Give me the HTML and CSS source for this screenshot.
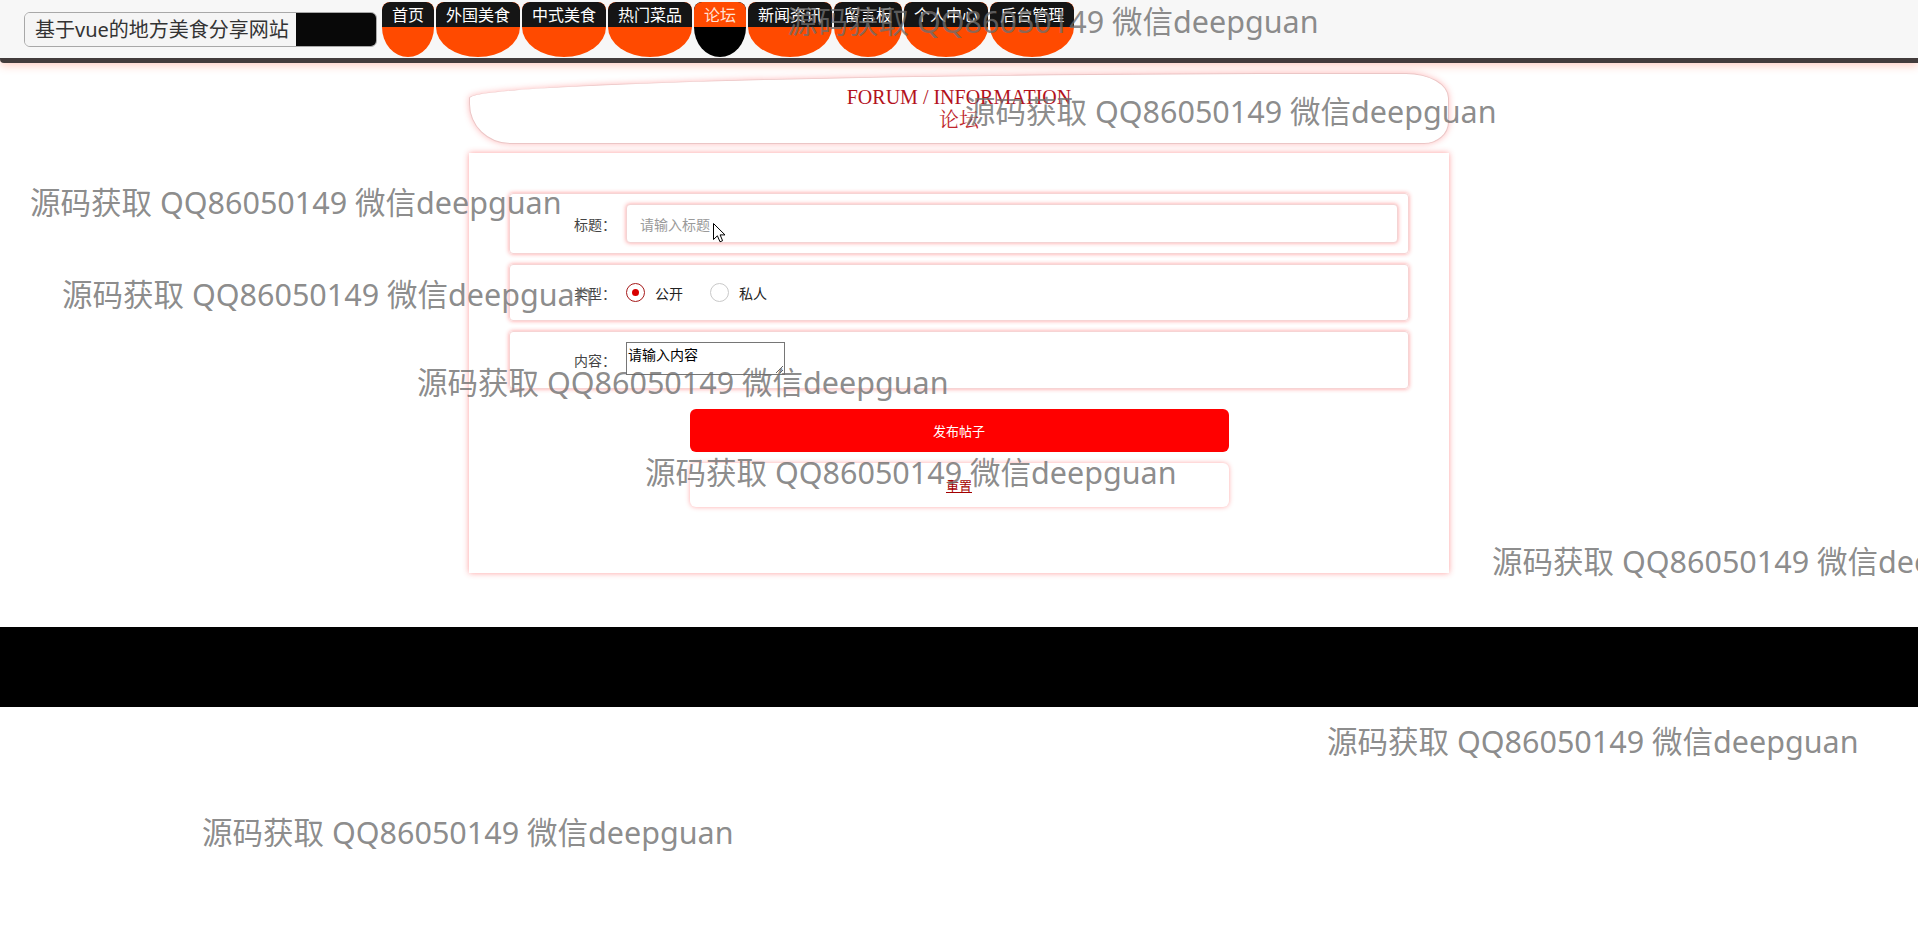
FILE: index.html
```html
<!DOCTYPE html>
<html lang="zh-CN">
<head>
<meta charset="utf-8">
<title>论坛</title>
<link rel="stylesheet" href="styles.css">
</head>
<body>
<header class="header">
  <div class="brand">
    <span class="brand-text">基于vue的地方美食分享网站</span>
    <span class="brand-btn"></span>
  </div>
  <nav class="nav">
    <a class="nav-item"><span class="nav-label">首页</span></a>
    <a class="nav-item"><span class="nav-label">外国美食</span></a>
    <a class="nav-item"><span class="nav-label">中式美食</span></a>
    <a class="nav-item"><span class="nav-label">热门菜品</span></a>
    <a class="nav-item is-active"><span class="nav-label">论坛</span></a>
    <a class="nav-item"><span class="nav-label">新闻资讯</span></a>
    <a class="nav-item"><span class="nav-label">留言板</span></a>
    <a class="nav-item"><span class="nav-label">个人中心</span></a>
    <a class="nav-item"><span class="nav-label">后台管理</span></a>
  </nav>
</header>

<main class="main">
  <div class="title-box">
    <div class="title-en">FORUM / INFORMATION</div>
    <div class="title-cn">论坛</div>
  </div>

  <form class="form-card">
    <div class="form-row">
      <label class="form-label">标题：</label>
      <input class="form-input" type="text" placeholder="请输入标题">
    </div>
    <div class="form-row">
      <label class="form-label">类型：</label>
      <div class="radio-group">
        <span class="radio is-checked"><span class="radio-ring"></span><span class="radio-text">公开</span></span>
        <span class="radio"><span class="radio-ring"></span><span class="radio-text">私人</span></span>
      </div>
    </div>
    <div class="form-row">
      <label class="form-label">内容：</label>
      <div class="textarea-wrap"><textarea class="form-textarea">请输入内容</textarea></div>
    </div>
    <button class="btn btn-primary" type="button">发布帖子</button>
    <button class="btn btn-reset" type="button">重置</button>
  </form>
</main>

<footer class="footer"></footer>

<div class="watermarks">
  <span class="wm wm-1">源码获取 QQ86050149 微信deepguan</span>
  <span class="wm wm-2">源码获取 QQ86050149 微信deepguan</span>
  <span class="wm wm-3">源码获取 QQ86050149 微信deepguan</span>
  <span class="wm wm-4">源码获取 QQ86050149 微信deepguan</span>
  <span class="wm wm-5">源码获取 QQ86050149 微信deepguan</span>
  <span class="wm wm-6">源码获取 QQ86050149 微信deepguan</span>
  <span class="wm wm-7">源码获取 QQ86050149 微信deepguan</span>
  <span class="wm wm-8">源码获取 QQ86050149 微信deepguan</span>
  <span class="wm wm-9">源码获取 QQ86050149 微信deepguan</span>
</div>

<svg class="cursor" width="13" height="20" viewBox="0 0 13 20">
  <path d="M0.5 0.5 L0.5 16.5 L4.4 12.8 L7 18.8 L9.6 17.7 L7.1 11.9 L12 11.9 Z" fill="#fff" stroke="#000" stroke-width="1" stroke-linejoin="round"/>
</svg>
</body>
</html>
```

FILE: styles.css
```css
* { box-sizing: border-box; }

html, body {
  margin: 0;
  padding: 0;
}

body {
  position: relative;
  min-height: 934px;
  background: #ffffff;
  font-family: "Noto Sans CJK SC", "Noto Sans", sans-serif;
  color: #333;
  overflow: hidden;
}

/* ---------- header ---------- */
.header {
  display: flex;
  align-items: flex-start;
  height: 63px;
  padding-left: 24px;
  background: #f7f7f7;
  border-bottom: 5px solid #433c3c;
  border-bottom-left-radius: 4px;
  box-shadow: 0 3px 8px rgba(255, 90, 50, 0.28);
}

.brand {
  display: flex;
  width: 353px;
  height: 35px;
  margin-top: 12px;
  border: 1px solid #a8a8a8;
  border-radius: 6px;
  overflow: hidden;
}

.brand-text {
  flex: 1;
  min-width: 0;
  overflow: hidden;
  padding-left: 10px;
  background: #f5f5f5;
  font-family: "Noto Sans", "Noto Sans CJK SC", sans-serif;
  font-size: 20px;
  line-height: 33px;
  color: #333;
  white-space: nowrap;
}

.brand-btn {
  flex: none;
  width: 80px;
  background: #080808;
}

.nav {
  display: flex;
  gap: 2px;
  margin-top: 2px;
  margin-left: 5px;
}

.nav-item {
  display: flex;
  flex-direction: column;
  height: 55px;
  background: #ff4a00;
  border-radius: 8px 8px 50% 50% / 8px 8px 30px 30px;
  overflow: hidden;
  cursor: pointer;
}

.nav-label {
  display: block;
  padding: 0 10px;
  background: #151515;
  color: #fff;
  font-size: 16px;
  line-height: 25px;
  white-space: nowrap;
  border-radius: 8px 8px 0 0;
}

.nav-item.is-active {
  background: #000;
}

.nav-item.is-active .nav-label {
  background: #ff4a00;
  color: #ffe2d4;
}

/* ---------- main ---------- */
.main {
  width: 980px;
  margin: 10px auto 0;
}

.title-box {
  height: 71px;
  padding-top: 12px;
  text-align: center;
  font-family: "Liberation Serif", "Noto Serif CJK SC", "AR PL UMing CN", serif;
  font-size: 20px;
  line-height: 23px;
  color: #b3121c;
  background: #fff;
  border: 1px solid #ebc6c6;
  border-radius: 876px 43px 25px 41px / 25px 25px 22px 40px;
  box-shadow: 0 0 6px rgba(255, 60, 60, 0.35);
}

.title-cn {
  font-weight: 400;
  color: #c0262c;
}

.form-card {
  margin-top: 9px;
  padding: 40px 40px 41px;
  background: #fff;
  box-shadow: 0 0 6px rgba(255, 40, 40, 0.45);
}

.form-row {
  display: flex;
  align-items: center;
  padding: 10px;
  margin-bottom: 10px;
  border-radius: 4px;
  border: 1px solid #f6d4d4;
  box-shadow: 0 0 4px rgba(255, 40, 40, 0.45);
}

.form-label {
  flex: none;
  width: 96px;
  margin-right: 10px;
  text-align: right;
  font-size: 14px;
  color: #444;
}

.form-input {
  flex: 1;
  height: 39px;
  padding: 0 13px;
  border: 1px solid #f3d4d4;
  border-radius: 4px;
  box-shadow: 0 0 4px rgba(255, 40, 40, 0.45);
  font-family: inherit;
  font-size: 14px;
  color: #333;
  outline: none;
  background: #fff;
}

.form-input::placeholder {
  color: #9a9a9a;
}

.radio-group {
  display: flex;
  align-items: center;
  height: 35px;
}

.radio {
  display: inline-flex;
  align-items: center;
  margin-right: 27px;
}

.radio-ring {
  position: relative;
  width: 19px;
  height: 19px;
  border: 1px solid #c9c9c9;
  border-radius: 50%;
  background: #fff;
}

.radio.is-checked .radio-ring {
  border: 1.5px solid #a61a1a;
}

.radio.is-checked .radio-ring::after {
  content: "";
  position: absolute;
  left: 50%;
  top: 50%;
  width: 7px;
  height: 7px;
  margin: -3.5px 0 0 -3.5px;
  border-radius: 50%;
  background: #d80000;
}

.radio-text {
  margin-left: 10px;
  font-size: 14px;
  color: #222;
}

.textarea-wrap {
  height: 36px;
}

.form-textarea {
  display: block;
  width: 159px;
  height: 33px;
  padding: 2px 1px;
  border: 1px solid #767676;
  font-family: "Noto Sans CJK SC", sans-serif;
  font-size: 14px;
  line-height: 18px;
  color: #000;
  background: #fff;
}

.btn {
  display: block;
  width: 539px;
  margin: 0 auto;
  border: none;
  border-radius: 6px;
  font-family: inherit;
  font-size: 13px;
  cursor: pointer;
}

.btn-primary {
  height: 43px;
  margin-top: 20px;
  background: #ff0000;
  color: #fff;
}

.btn-reset {
  height: 44px;
  margin-top: 11px;
  margin-bottom: 25px;
  background: #fff;
  color: #a30000;
  text-decoration: underline;
  box-shadow: 0 0 5px rgba(255, 40, 40, 0.4);
}

/* ---------- footer ---------- */
.footer {
  height: 80px;
  margin-top: 54px;
  background: #000;
}

/* ---------- overlays ---------- */
.wm {
  position: absolute;
  font-family: "Noto Sans", "Noto Sans CJK SC", sans-serif;
  font-weight: 400;
  font-size: 30.5px;
  line-height: 36px;
  color: rgba(110, 110, 110, 0.8);
  white-space: nowrap;
  pointer-events: none;
}

.wm-1 { left: 787px; top: 3px; }
.wm-2 { left: 965px; top: 93px; }
.wm-3 { left: 30px;  top: 184px; }
.wm-4 { left: 62px;  top: 276px; }
.wm-5 { left: 417px; top: 364px; }
.wm-6 { left: 645px; top: 454px; }
.wm-7 { left: 1492px; top: 543px; }
.wm-8 { left: 1327px; top: 723px; }
.wm-9 { left: 202px; top: 814px; }

.cursor {
  position: absolute;
  left: 713px;
  top: 223px;
}
```
